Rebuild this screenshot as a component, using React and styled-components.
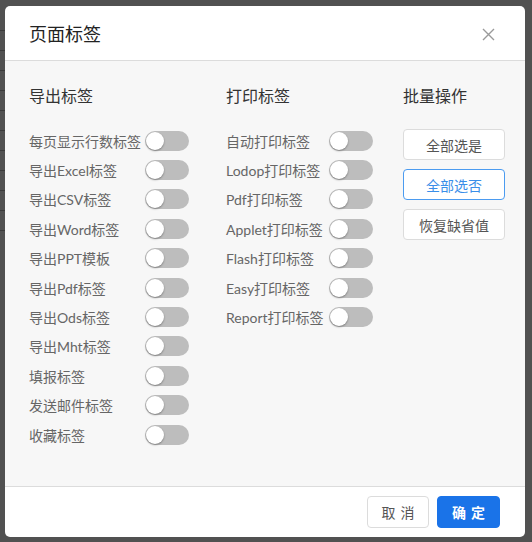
import React from "react";
import styled, { createGlobalStyle } from "styled-components";

const Global = createGlobalStyle`
  html, body { margin: 0; padding: 0; }
  body {
    background:
      repeating-linear-gradient(to bottom, transparent 0 19px, #3a3a3a 19px 20px) 0 11px / 5px 220px no-repeat,
      #515151;
    font-family: Lato, "Noto Sans CJK SC", sans-serif;
    width: 532px;
    height: 542px;
    overflow: hidden;
  }
`;

const Page = styled.div`
  padding: 6px 7px 5px 5px;
`;

const Modal = styled.div`
  width: 520px;
  height: 531px;
  background: #fff;
  border-radius: 5px;
  display: flex;
  flex-direction: column;
  overflow: hidden;
`;

const Header = styled.div`
  height: 54px;
  flex: none;
  display: flex;
  align-items: center;
  justify-content: space-between;
  padding: 0 30px 0 24px;
  border-bottom: 1px solid #dcdcdc;
`;

const Title = styled.div`
  font-size: 18px;
  color: #222;
`;

const Close = styled.button`
  border: none;
  background: none;
  padding: 0;
  width: 14px;
  height: 14px;
  display: flex;
  align-items: center;
  justify-content: center;
  margin-top: 2px;
`;

const Body = styled.div`
  flex: 1;
  background: #f7f7f7;
  padding: 24px 0 0 24px;
  display: flex;
`;

const Column = styled.div`
  width: ${(p) => p.$w}px;
  flex: none;
  display: flex;
  flex-direction: column;
`;

const ColTitle = styled.div`
  font-size: 16px;
  line-height: 22px;
  color: #333;
`;

const List = styled.div`
  margin-top: 19px;
  display: grid;
  grid-template-columns: ${(p) => p.$label}px 44px;
  grid-auto-rows: 29.4px;
  align-items: center;
`;

const Label = styled.span`
  font-size: 14px;
  color: #666;
  white-space: nowrap;
`;

const Track = styled.span`
  width: 44px;
  height: 20px;
  border-radius: 10px;
  background: #bdbdbd;
  position: relative;
  display: block;
`;

const Knob = styled.span`
  position: absolute;
  left: 1px;
  top: 1px;
  width: 18px;
  height: 18px;
  border-radius: 50%;
  background: #fff;
  box-shadow: 0 1px 2px rgba(0, 0, 0, 0.35);
`;

const Actions = styled.div`
  margin-top: 22px;
  display: flex;
  flex-direction: column;
  gap: 9px;
`;

const ActionButton = styled.button`
  width: 102px;
  height: 31px;
  background: #fff;
  border: 1px solid ${(p) => (p.$active ? "#4b9bf0" : "#dcdcdc")};
  color: ${(p) => (p.$active ? "#3a8ee8" : "#555")};
  border-radius: 4px;
  font-family: inherit;
  font-size: 14px;
  padding: 0;
`;

const Footer = styled.div`
  height: 50px;
  flex: none;
  border-top: 1px solid #dcdcdc;
  display: flex;
  align-items: center;
  justify-content: flex-end;
  gap: 8px;
  padding-right: 25px;
`;

const FooterButton = styled.button`
  height: 32px;
  width: ${(p) => (p.$primary ? 63 : 62)}px;
  border-radius: 4px;
  border: 1px solid ${(p) => (p.$primary ? "#1a73e8" : "#dcdcdc")};
  background: ${(p) => (p.$primary ? "#1a73e8" : "#fff")};
  color: ${(p) => (p.$primary ? "#fff" : "#555")};
  font-family: inherit;
  font-size: 14px;
  font-weight: ${(p) => (p.$primary ? 700 : 400)};
  letter-spacing: 5px;
  text-indent: 5px;
  padding: 0;
`;

const Toggle = () => (
  <Track>
    <Knob />
  </Track>
);

const exportTags = [
  "每页显示行数标签",
  "导出Excel标签",
  "导出CSV标签",
  "导出Word标签",
  "导出PPT模板",
  "导出Pdf标签",
  "导出Ods标签",
  "导出Mht标签",
  "填报标签",
  "发送邮件标签",
  "收藏标签",
];

const printTags = [
  "自动打印标签",
  "Lodop打印标签",
  "Pdf打印标签",
  "Applet打印标签",
  "Flash打印标签",
  "Easy打印标签",
  "Report打印标签",
];

const TagColumn = ({ title, items, width, labelWidth }) => (
  <Column $w={width}>
    <ColTitle>{title}</ColTitle>
    <List $label={labelWidth}>
      {items.map((t) => (
        <React.Fragment key={t}>
          <Label>{t}</Label>
          <Toggle />
        </React.Fragment>
      ))}
    </List>
  </Column>
);

export default function App() {
  return (
    <>
      <Global />
      <Page>
        <Modal>
          <Header>
            <Title>页面标签</Title>
            <Close aria-label="close">
              <svg width="13" height="13" viewBox="0 0 13 13">
                <path d="M1 1L12 12M12 1L1 12" stroke="#9a9a9a" strokeWidth="1.4" fill="none" />
              </svg>
            </Close>
          </Header>
          <Body>
            <TagColumn title="导出标签" items={exportTags} width={197} labelWidth={116} />
            <TagColumn title="打印标签" items={printTags} width={177} labelWidth={103} />
            <Column $w={110}>
              <ColTitle>批量操作</ColTitle>
              <Actions>
                <ActionButton>全部选是</ActionButton>
                <ActionButton $active>全部选否</ActionButton>
                <ActionButton>恢复缺省值</ActionButton>
              </Actions>
            </Column>
          </Body>
          <Footer>
            <FooterButton>取消</FooterButton>
            <FooterButton $primary>确定</FooterButton>
          </Footer>
        </Modal>
      </Page>
    </>
  );
}
